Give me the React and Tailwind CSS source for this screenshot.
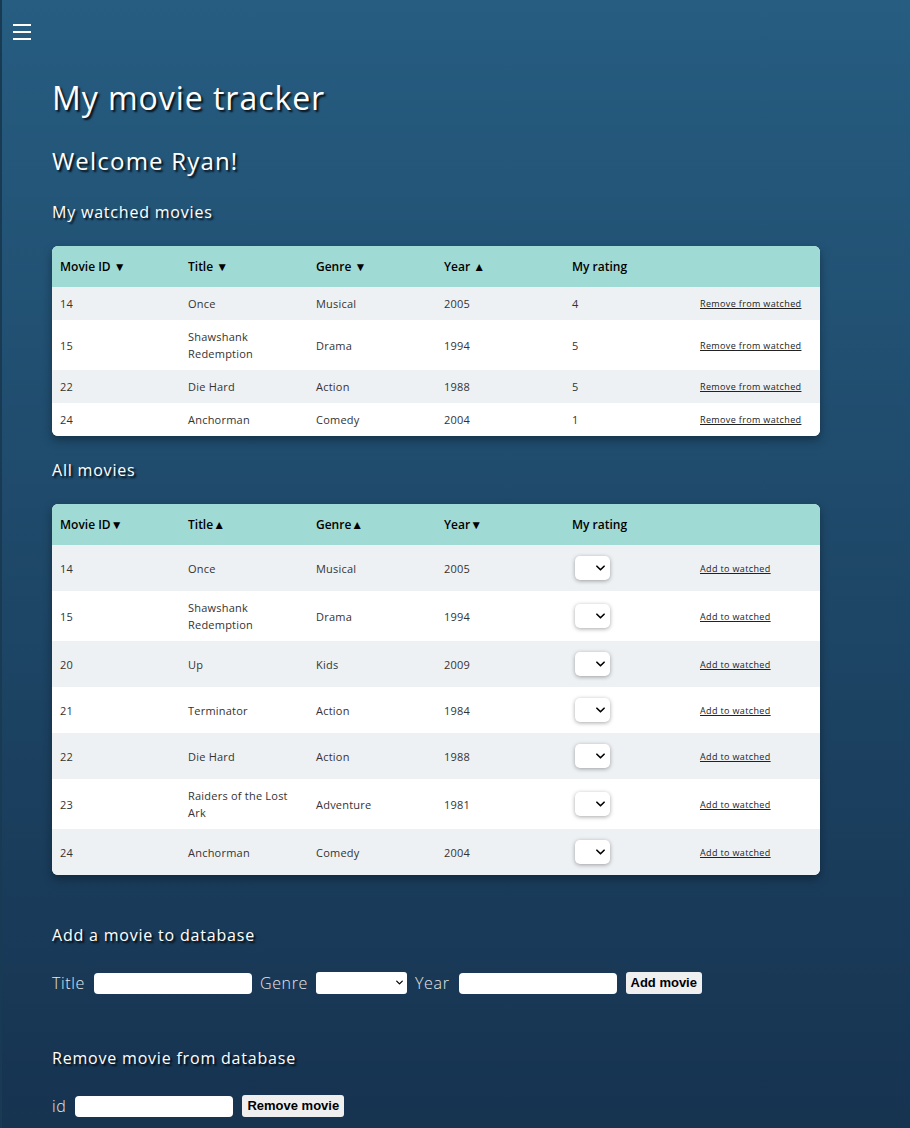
import React from 'react';

const watched = [
  { id: 14, title: 'Once', genre: 'Musical', year: 2005, rating: 4 },
  { id: 15, title: 'Shawshank Redemption', genre: 'Drama', year: 1994, rating: 5 },
  { id: 22, title: 'Die Hard', genre: 'Action', year: 1988, rating: 5 },
  { id: 24, title: 'Anchorman', genre: 'Comedy', year: 2004, rating: 1 },
];

const allMovies = [
  { id: 14, title: 'Once', genre: 'Musical', year: 2005 },
  { id: 15, title: 'Shawshank Redemption', genre: 'Drama', year: 1994 },
  { id: 20, title: 'Up', genre: 'Kids', year: 2009 },
  { id: 21, title: 'Terminator', genre: 'Action', year: 1984 },
  { id: 22, title: 'Die Hard', genre: 'Action', year: 1988 },
  { id: 23, title: 'Raiders of the Lost Ark', genre: 'Adventure', year: 1981 },
  { id: 24, title: 'Anchorman', genre: 'Comedy', year: 2004 },
];

const font = { fontFamily: '"Open Sans", "Noto Sans", sans-serif' };
const btnFont = { fontFamily: '"Liberation Sans", Arial, sans-serif' };

const Chevron = ({ className }) => (
  <svg viewBox="0 0 10 6" className={className} fill="none" stroke="currentColor" strokeWidth="1.8" strokeLinecap="round" strokeLinejoin="round">
    <path d="M1 1l4 4 4-4" />
  </svg>
);

const Heading = ({ className, children }) => (
  <h2 className={`text-white font-medium tracking-[0.05em] [text-shadow:2px_2px_2px_rgba(0,0,0,0.85)] ${className}`}>{children}</h2>
);

const RatingSelect = () => (
  <div className="relative w-[35px] h-[24px] my-[3px] ml-[3px] bg-white rounded-[5px] shadow-[0_1px_4px_rgba(0,0,0,0.35)]">
    <Chevron className="absolute right-[5px] top-[9px] w-[9px] h-[6px] text-black" />
  </div>
);

const HeadCell = ({ children }) => (
  <th className="w-[128px] px-2 py-3 text-left text-[12px] leading-[17px] font-semibold text-black">{children}</th>
);

const Cell = ({ children }) => (
  <td className="px-2 py-2 text-[11px] leading-[17px] text-[#333] align-middle tracking-[0.02em]">{children}</td>
);

const RowLink = ({ children }) => (
  <a href="#" className="block text-[9px] leading-[17px] tracking-[0.04em] underline text-[#222]">{children}</a>
);

export default function App() {
  return (
    <div style={font} className="min-h-[1128px] bg-gradient-to-b from-[#265d81] to-[#163350] border-l-2 border-[#183a52]">
      <div className="pt-[24px] pl-[11px] h-[58px]">
        <div className="flex flex-col gap-[5px] w-[18px]">
          <span className="block h-[2px] bg-white"></span>
          <span className="block h-[2px] bg-white"></span>
          <span className="block h-[2px] bg-white"></span>
        </div>
      </div>

      <div className="pl-[50px] pb-[8px]">
        <h1 className="text-white text-[32px] leading-[40px] font-medium tracking-[0.03em] mt-[20px] [text-shadow:2px_2px_2px_rgba(0,0,0,0.85)]">My movie tracker</h1>
        <Heading className="text-[24px] leading-[32px] mt-[27px]">Welcome Ryan!</Heading>
        <Heading className="text-[16px] leading-[24px] mt-[23px]">My watched movies</Heading>

        <div className="mt-[22px] w-[768px] rounded-[6px] overflow-hidden bg-white shadow-[0_4px_10px_rgba(0,0,0,0.35)]">
          <table className="w-full table-fixed border-collapse">
            <thead className="bg-[#a0dad5]">
              <tr>
                <HeadCell>Movie ID ▼</HeadCell>
                <HeadCell>Title ▼</HeadCell>
                <HeadCell>Genre ▼</HeadCell>
                <HeadCell>Year ▲</HeadCell>
                <HeadCell>My rating</HeadCell>
                <HeadCell></HeadCell>
              </tr>
            </thead>
            <tbody>
              {watched.map((m, i) => (
                <tr key={m.id} className={i % 2 === 0 ? 'bg-[#eef1f4]' : 'bg-white'}>
                  <Cell>{m.id}</Cell>
                  <Cell>{m.title}</Cell>
                  <Cell>{m.genre}</Cell>
                  <Cell>{m.year}</Cell>
                  <Cell>{m.rating}</Cell>
                  <Cell><RowLink>Remove from watched</RowLink></Cell>
                </tr>
              ))}
            </tbody>
          </table>
        </div>

        <Heading className="text-[16px] leading-[24px] mt-[22px]">All movies</Heading>

        <div className="mt-[22px] w-[768px] rounded-[6px] overflow-hidden bg-white shadow-[0_4px_10px_rgba(0,0,0,0.35)]">
          <table className="w-full table-fixed border-collapse">
            <thead className="bg-[#a0dad5]">
              <tr>
                <HeadCell>Movie ID▼</HeadCell>
                <HeadCell>Title▲</HeadCell>
                <HeadCell>Genre▲</HeadCell>
                <HeadCell>Year▼</HeadCell>
                <HeadCell>My rating</HeadCell>
                <HeadCell></HeadCell>
              </tr>
            </thead>
            <tbody>
              {allMovies.map((m, i) => (
                <tr key={m.id} className={i % 2 === 0 ? 'bg-[#eef1f4]' : 'bg-white'}>
                  <Cell>{m.id}</Cell>
                  <Cell>{m.title}</Cell>
                  <Cell>{m.genre}</Cell>
                  <Cell>{m.year}</Cell>
                  <Cell><RatingSelect /></Cell>
                  <Cell><RowLink>Add to watched</RowLink></Cell>
                </tr>
              ))}
            </tbody>
          </table>
        </div>

        <Heading className="text-[16px] leading-[24px] mt-[48px]">Add a movie to database</Heading>
        <div className="flex items-center mt-[24px] text-[16px] text-[#e6e6e6] font-light tracking-[0.04em]">
          <span>Title</span>
          <input className="ml-[9px] w-[158px] h-[21px] bg-white rounded-[4px] outline-none" />
          <span className="ml-[8px]">Genre</span>
          <div className="relative ml-[8px] w-[91px] h-[22px] bg-white rounded-[3px]">
            <Chevron className="absolute right-[4px] top-[8px] w-[7px] h-[5px] text-black" />
          </div>
          <span className="ml-[8px]">Year</span>
          <input className="ml-[9px] w-[158px] h-[21px] bg-white rounded-[4px] outline-none" />
          <button className="ml-[9px] h-[22px] px-[5px] bg-[#efefef] rounded-[3px] text-black text-[13px] font-bold tracking-normal" style={btnFont}>Add movie</button>
        </div>

        <Heading className="text-[16px] leading-[24px] mt-[51px]">Remove movie from database</Heading>
        <div className="flex items-center mt-[24px] text-[16px] text-[#e6e6e6] font-light tracking-[0.04em]">
          <span>id</span>
          <input className="ml-[9px] w-[158px] h-[21px] bg-white rounded-[4px] outline-none" />
          <button className="ml-[9px] h-[22px] px-[5px] bg-[#efefef] rounded-[3px] text-black text-[13px] font-bold tracking-normal" style={btnFont}>Remove movie</button>
        </div>
      </div>
    </div>
  );
}
